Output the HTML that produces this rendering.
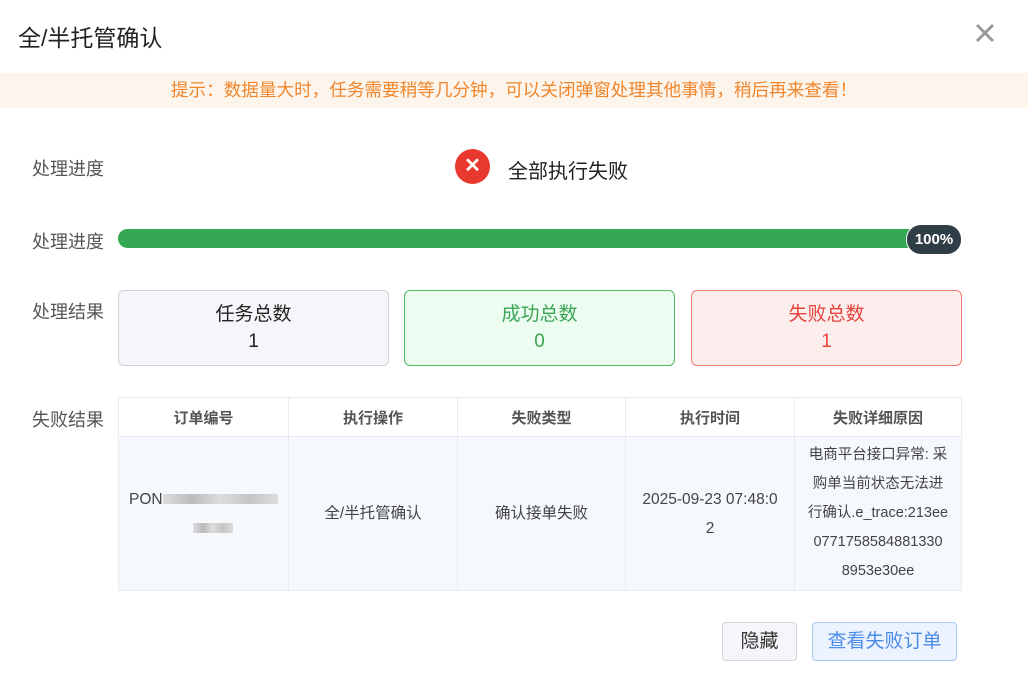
<!DOCTYPE html><html><head><meta charset="utf-8"><style>
body{margin:0;width:1028px;height:678px;background:#fff;position:relative;overflow:hidden;font-family:"Liberation Sans","Noto Sans CJK SC",sans-serif;color:#333}
.a{position:absolute}
.lbl{position:absolute;left:32px;font-size:18px;color:#555}
.card{position:absolute;top:290px;width:271px;height:76px;border-radius:6px;box-sizing:border-box;text-align:center;font-size:19px;line-height:27px;padding-top:10px}
table{position:absolute;left:118px;top:397px;width:844px;height:194px;border-collapse:collapse;font-size:15.5px;color:#444}
td,th{border:1px solid #e8ecf2;text-align:center;padding:0 6px}
th{height:38px;font-weight:bold;color:#555;background:#fff;font-size:15px}
td{background:#f5f8fd;line-height:29px}
.blur{display:inline-block;height:10px;background:linear-gradient(90deg,#ddd,#bbb,#ddd,#c4c4c4,#ddd);vertical-align:middle}
</style></head><body>
<div class="a" style="left:18px;top:19px;font-size:23px;color:#222">全/半托管确认</div>
<svg class="a" style="left:975px;top:23px" width="20" height="20"><path d="M2 2L18 18M18 2L2 18" stroke="#999" stroke-width="3"/></svg>
<div class="a" style="left:0;top:73px;width:1028px;height:35px;background:#fdf4eb;color:#f0862d;font-size:17.6px;line-height:35px;text-align:center">提示：数据量大时，任务需要稍等几分钟，可以关闭弹窗处理其他事情，稍后再来查看！</div>
<div class="lbl" style="top:155px">处理进度</div>
<div class="a" style="left:455px;top:149px;width:35px;height:35px;border-radius:50%;background:#e8392f;color:#fff;text-align:center;line-height:35px;font-size:20px;font-weight:bold">✕</div>
<div class="a" style="left:508px;top:155px;font-size:20px;color:#222">全部执行失败</div>
<div class="lbl" style="top:228px">处理进度</div>
<div class="a" style="left:118px;top:229px;width:820px;height:19px;border-radius:10px;background:#34a853"></div>
<div class="a" style="left:906px;top:224px;width:54px;height:29px;border-radius:15px;background:#2f3e46;border:1px solid #fff;color:#fff;font-weight:bold;font-size:15px;line-height:29px;text-align:center">100%</div>
<div class="lbl" style="top:298px">处理结果</div>
<div class="card" style="left:118px;background:#f5f6f9;border:1px solid #d2d4d8;color:#222">任务总数<br>1</div>
<div class="card" style="left:404px;background:#edfcf1;border:1px solid #52bb6a;color:#3aa655">成功总数<br>0</div>
<div class="card" style="left:691px;background:#fdeeee;border:1px solid #ee7a75;color:#e8443c">失败总数<br>1</div>
<div class="lbl" style="top:406px">失败结果</div>
<table><tr><th style="width:157px">订单编号</th><th style="width:156px">执行操作</th><th style="width:155px">失败类型</th><th style="width:156px">执行时间</th><th>失败详细原因</th></tr>
<tr><td style="text-align:left;padding-left:10px">PON<span class="blur" style="width:115px"></span><br><span class="blur" style="width:40px;margin-left:64px"></span></td><td>全/半托管确认</td><td>确认接单失败</td><td>2025-09-23 07:48:0<br>2</td><td style="font-size:14.5px">电商平台接口异常: 采<br>购单当前状态无法进<br>行确认.e_trace:213ee<br>0771758584881330<br>8953e30ee</td></tr></table>
<div class="a" style="left:722px;top:622px;width:75px;height:39px;box-sizing:border-box;border:1px solid #d2d5db;border-radius:4px;background:#f5f6fa;text-align:center;line-height:37px;font-size:19px;color:#333">隐藏</div>
<div class="a" style="left:812px;top:622px;width:145px;height:39px;box-sizing:border-box;border:1px solid #a9c9f5;border-radius:4px;background:#ecf3fe;text-align:center;line-height:37px;font-size:19px;color:#4a8bea">查看失败订单</div>
</body></html>
